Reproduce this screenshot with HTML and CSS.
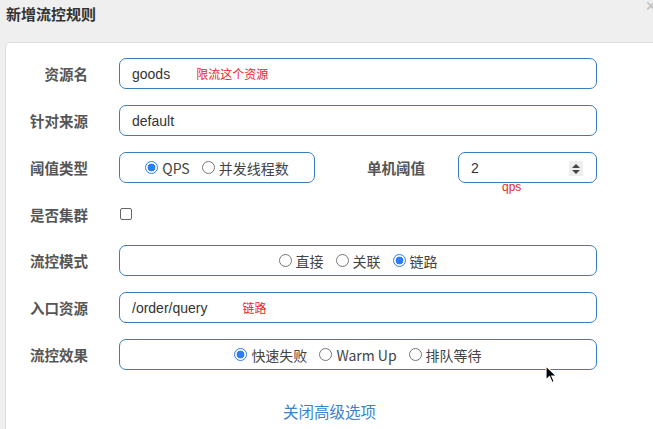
FILE: index.html
```html
<!DOCTYPE html>
<html>
<head>
<meta charset="utf-8">
<link rel="stylesheet" href="styles.css">
</head>
<body>
<div class="header">
  <h1 class="title">新增流控规则</h1>
  <span class="close">×</span>
</div>
<div class="panel">
  <div class="form">
    <div class="row">
      <label class="lbl">资源名</label>
      <div class="field box text">goods<span class="note note-a">限流这个资源</span></div>
    </div>
    <div class="row">
      <label class="lbl">针对来源</label>
      <div class="field box text">default</div>
    </div>
    <div class="row">
      <label class="lbl">阈值类型</label>
      <div class="split">
        <div class="box radios small">
          <span class="opt"><i class="radio on"></i>QPS</span>
          <span class="opt"><i class="radio"></i>并发线程数</span>
        </div>
        <label class="lbl lbl2">单机阈值</label>
        <div class="numwrap">
          <div class="box text num">2<span class="spin"><i class="up"></i><i class="down"></i></span></div>
          <span class="qps">qps</span>
        </div>
      </div>
    </div>
    <div class="row row-check">
      <label class="lbl">是否集群</label>
      <div class="field"><i class="check"></i></div>
    </div>
    <div class="row">
      <label class="lbl">流控模式</label>
      <div class="field box radios">
        <span class="opt"><i class="radio"></i>直接</span>
        <span class="opt"><i class="radio"></i>关联</span>
        <span class="opt"><i class="radio on"></i>链路</span>
      </div>
    </div>
    <div class="row">
      <label class="lbl">入口资源</label>
      <div class="field box text">/order/query<span class="note note-b">链路</span></div>
    </div>
    <div class="row">
      <label class="lbl">流控效果</label>
      <div class="field box radios">
        <span class="opt"><i class="radio on"></i>快速失败</span>
        <span class="opt"><i class="radio"></i>Warm Up</span>
        <span class="opt"><i class="radio"></i>排队等待</span>
      </div>
    </div>
  </div>
  <div class="more"><a class="link">关闭高级选项</a></div>
  <svg class="cursor" width="14" height="20" viewBox="0 0 14 20"><path d="M1 1 L1 15 L4.5 11.5 L7 17.5 L9.2 16.5 L6.8 11 L11.5 11 Z" fill="#000" stroke="#fff" stroke-width="1.2"/></svg>
</div>
</body>
</html>
```
FILE: styles.css
```css
* { box-sizing: border-box; }
html, body { margin: 0; padding: 0; }
body {
  background: #efefef;
  font-family: "Liberation Sans", "Noto Sans CJK SC", sans-serif;
  width: 653px;
  height: 429px;
  overflow: hidden;
  position: relative;
}
.header {
  height: 42px;
  padding: 4px 6px 0;
  position: relative;
}
.title {
  margin: 0;
  font-size: 15px;
  line-height: 20px;
  font-weight: bold;
  color: #333;
  font-family: "Noto Sans CJK SC", sans-serif;
}
.close {
  position: absolute;
  right: -3px;
  top: -4px;
  font-size: 18px;
  color: #bbb;
}
.panel {
  margin-left: 5px;
  width: 660px;
  height: 420px;
  background: #fff;
  border: 1px solid #dcdcdc;
  border-radius: 5px;
  padding-top: 15px;
  position: relative;
}
.form {
  display: flex;
  flex-direction: column;
  gap: 16px;
}
.row {
  display: flex;
  align-items: center;
  height: 31px;
}
.row-check { height: 30px; }
.lbl {
  width: 113px;
  padding-right: 31px;
  text-align: right;
  font-family: "Noto Sans CJK SC", sans-serif;
  font-weight: bold;
  font-size: 14.5px;
  color: #555;
  flex: none;
}
.field { width: 478px; display: flex; align-items: center; }
.box {
  height: 31px;
  border: 1px solid #3a7dbf;
  border-radius: 7px;
  display: flex;
  align-items: center;
  font-size: 14px;
  color: #333;
}
.text { padding-left: 12px; }
.note {
  color: #e8262a;
  font-size: 12px;
  font-family: "Noto Sans CJK SC", sans-serif;
}
.note-a { margin-left: 26px; }
.note-b { margin-left: 35px; }
.split { display: flex; align-items: center; width: 478px; }
.small { width: 196px; }
.radios { justify-content: center; font-family: "Noto Sans CJK SC", "Liberation Sans", sans-serif; color: #444; }
.opt { display: inline-flex; align-items: center; margin: 0 6px; font-size: 14px; }
.opt .radio { margin-right: 4px; }
.radio {
  display: inline-block;
  width: 13px;
  height: 13px;
  border: 1px solid #777;
  border-radius: 50%;
  background: #fff;
  flex: none;
}
.radio.on {
  border: 1px solid #2f7df6;
  background: radial-gradient(circle, #2f7df6 0 3.6px, #fff 4.2px);
}
.lbl2 { width: auto; padding: 0 0 0 52px; }
.numwrap { position: relative; margin-left: 33px; }
.num { width: 139px; position: relative; }
.spin {
  position: absolute;
  left: 110px;
  top: 8px;
  width: 14px;
  height: 15px;
  background: #eee;
  display: flex;
  flex-direction: column;
  align-items: center;
  justify-content: center;
  gap: 2px;
}
.up, .down { width: 0; height: 0; border-left: 4px solid transparent; border-right: 4px solid transparent; }
.up { border-bottom: 4px solid #444; }
.down { border-top: 4px solid #444; }
.qps {
  position: absolute;
  left: 44px;
  top: 28px;
  color: #e8262a;
  font-size: 12px;
}
.check {
  display: inline-block;
  width: 12px;
  height: 12px;
  border: 1px solid #666;
  border-radius: 2px;
  margin-left: 1px;
  margin-top: -1px;
}
.more { padding: 30px 0 0 277px; }
.link {
  color: #3b82c8;
  font-size: 15.5px;
  font-family: "Noto Sans CJK SC", sans-serif;
}
.cursor { position: absolute; left: 539px; top: 322px; }
```
